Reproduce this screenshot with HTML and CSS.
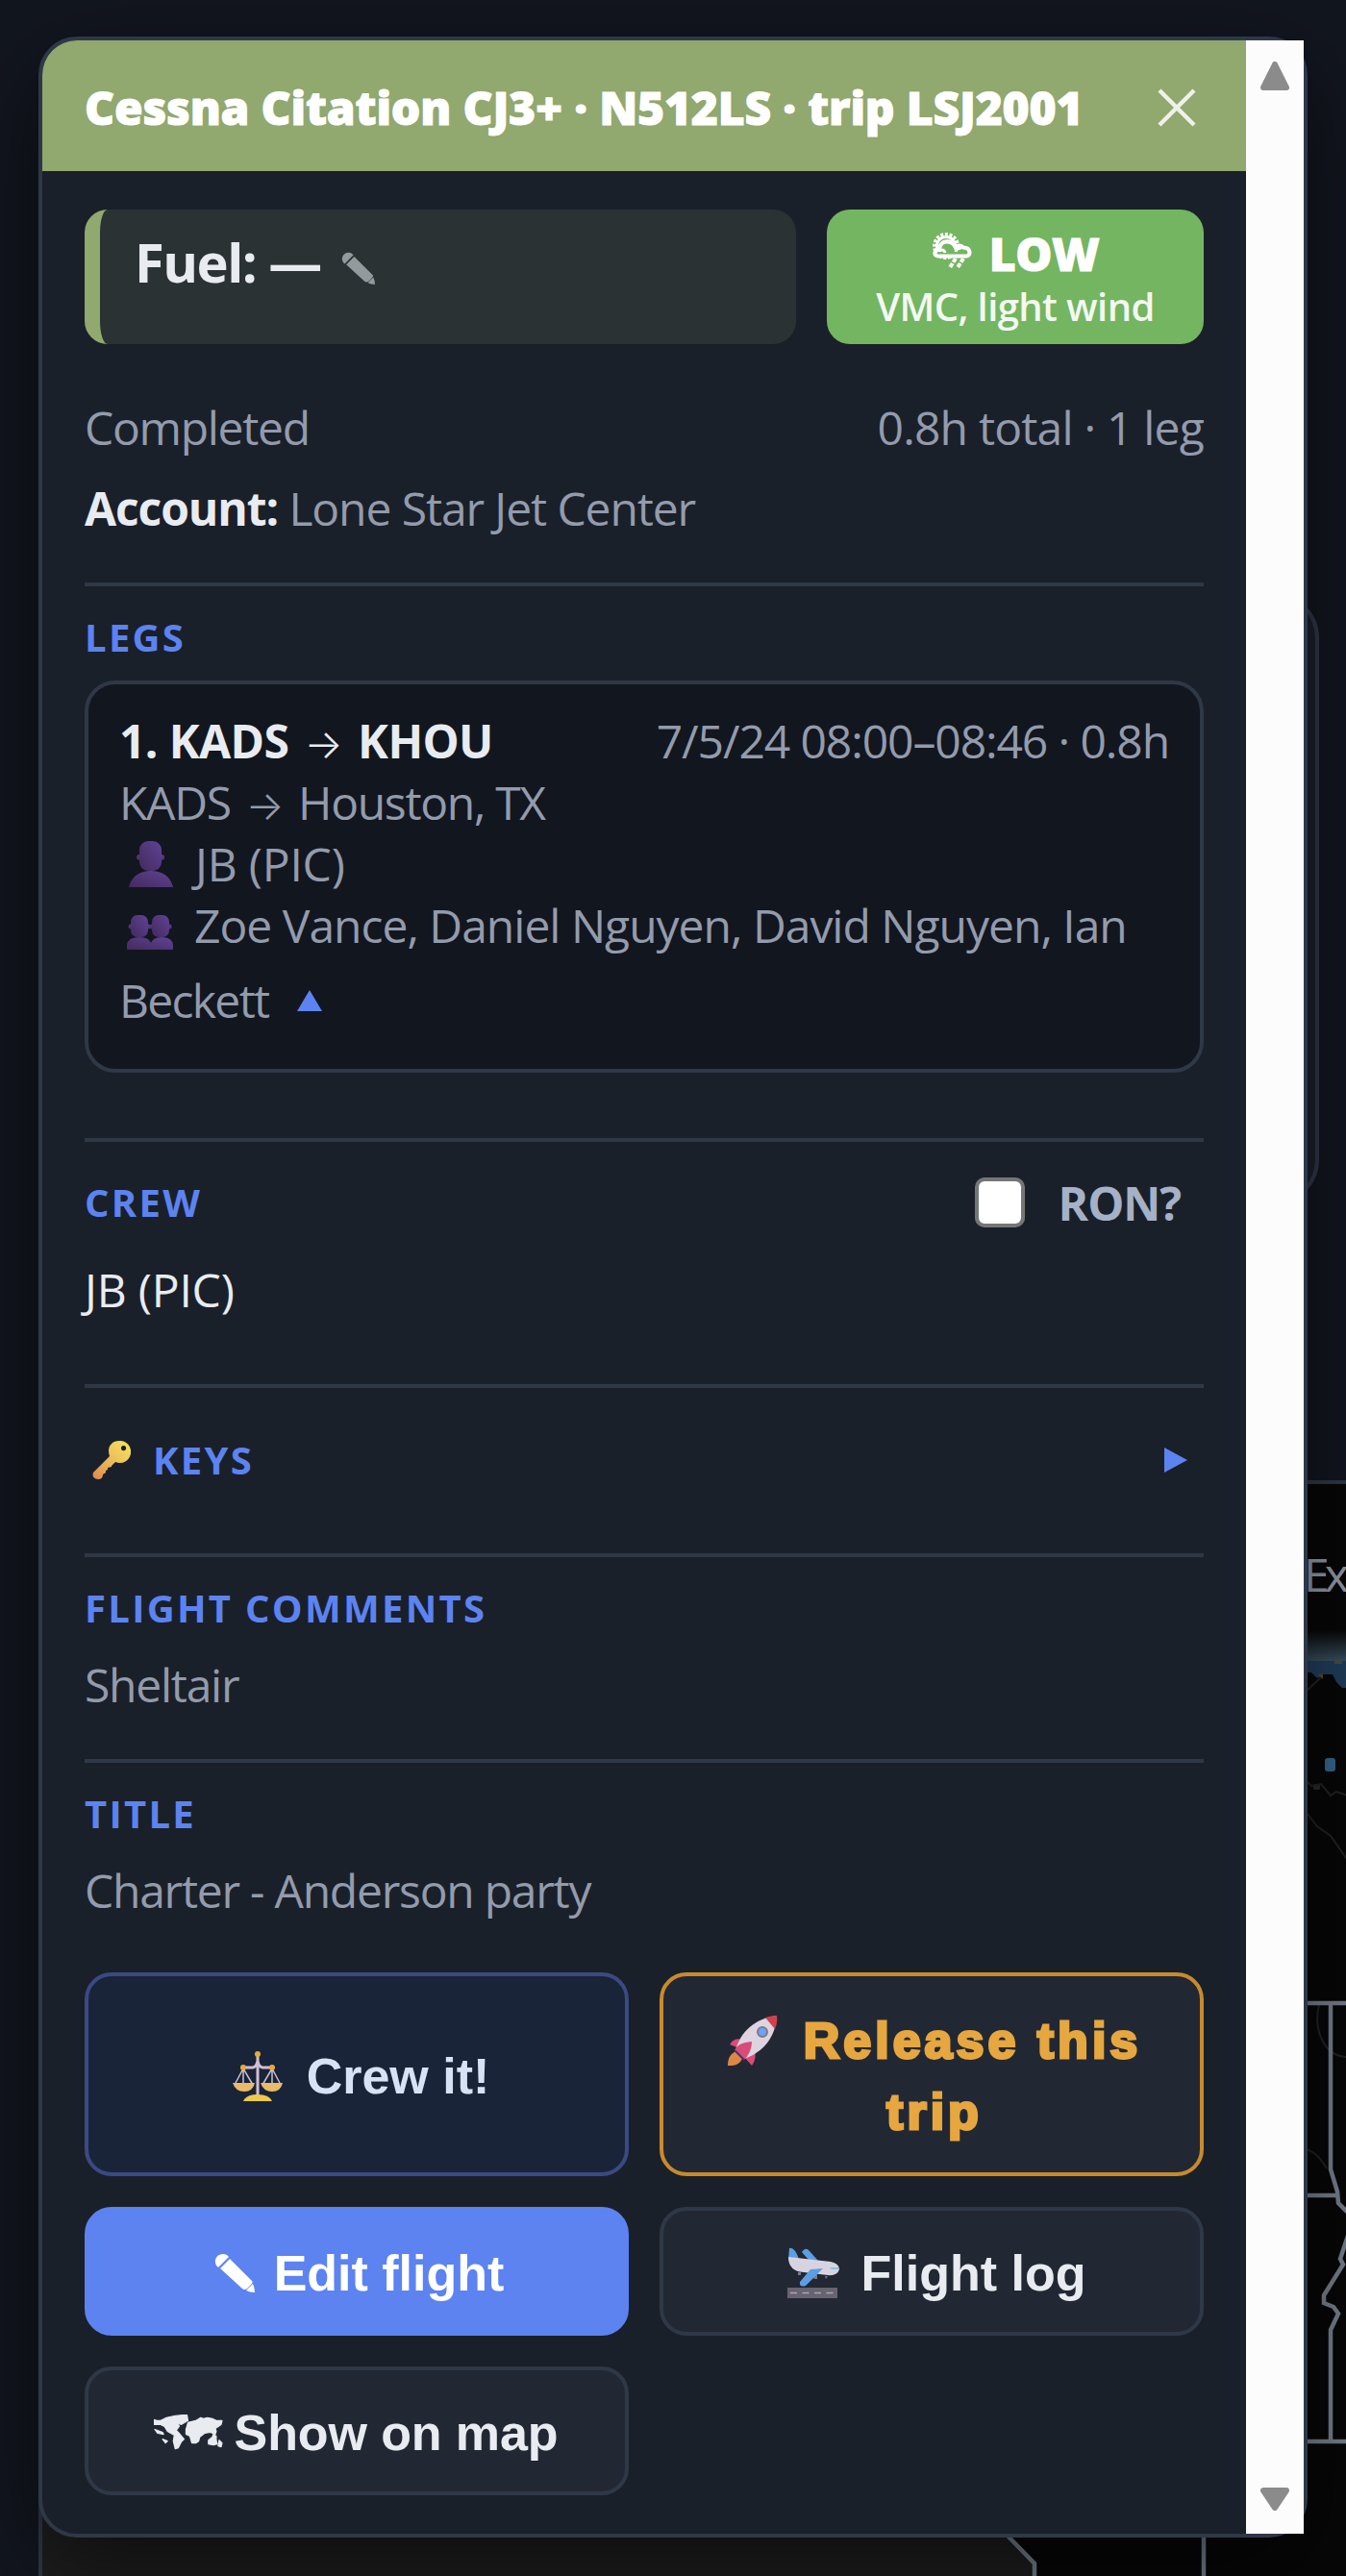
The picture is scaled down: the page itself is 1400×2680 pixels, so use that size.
FILE: index.html
```
<!DOCTYPE html>
<html lang="en">
<head>
    <meta charset="UTF-8">
    <title>Trip LSJ2001</title>
    <link rel="stylesheet" href="styles.css">
</head>
<body>
    <!-- page behind the popup -->
    <div class="back-card"></div>
    <div class="map">
        <svg class="map-svg" width="1356" height="1136" viewBox="44 1544 1356 1136">
            <defs>
                <linearGradient id="haze" x1="0" y1="0" x2="0" y2="1">
                    <stop offset="0" stop-color="#3a5160" stop-opacity="0"/>
                    <stop offset="1" stop-color="#3a5160"/>
                </linearGradient>
            </defs>
            <path d="M44 2500H1040L1050 2640L1076 2667V2680H44Z" fill="#1e1e1e"/>
            <rect x="1356" y="1696" width="48" height="32" fill="url(#haze)"/>
            <path d="M1356 1728H1400V1756H1396L1390 1750L1386 1742H1376L1370 1746L1364 1740H1356Z" fill="#213e5c"/>
            <path d="M1388 1728H1396V1731H1388ZM1370 1743L1376 1741V1747Z" fill="#544b35"/>
            <rect x="1378" y="1829" width="11" height="14" rx="3" fill="#35688f"/>
            <rect x="1366" y="1856" width="7" height="6" rx="2" fill="#2c2a26"/>
            <path d="M1356 1762L1374 1745M1356 1850L1364 1858L1374 1856L1384 1868L1390 1864L1402 1868M1356 1882L1370 1900L1384 1910L1402 1936M1372 2086C1366 2110 1376 2140 1402 2140M1356 2236C1366 2236 1374 2246 1380 2256" fill="none" stroke="#222325" stroke-width="2"/>
            <path d="M1356 2084H1404M1384 2084V2257L1391 2280L1392 2292L1404 2304M1356 2284H1391M1402 2326L1394 2350L1397 2356L1377 2388V2396L1387 2400L1392 2407L1384 2424V2540M1356 2540H1404M1046 2636L1076 2667V2680M1252 2630V2680" fill="none" stroke="#77808f" stroke-width="4.500"/>
        </svg>
        <span class="map-label">Ex</span>
    </div>

    <!-- flight popup -->
    <div class="popup">
        <div class="content">
            <div class="header">
                <span class="header-title">Cessna Citation CJ3+ · N512LS · trip LSJ2001</span>
                <svg class="close" width="40" height="40" viewBox="0 0 40 40"><path d="M2 2L38 38M38 2L2 38" stroke="#eef2e9" stroke-width="4.4"/></svg>
            </div>
            <div class="body">
                <div class="top">
                    <div class="fuel">
                        <b class="fuel-text">Fuel: —</b>
                        <svg class="fuel-pen" width="36" height="34" viewBox="0 0 43 41" fill="#939a9e"><path d="M2 13C-2 6 5-2 13 2L15 4L4 15Z"/><path d="M6 16L16 6L39 29Q41 30 37 34L34 37Q31 39 29 37Z"/><path d="M40 32Q42 36 42 41Q37 41 33 39Z"/></svg>
                    </div>
                    <div class="risk">
                        <div class="risk-level">
                            <svg width="42" height="38" viewBox="0 0 42 38" fill="none" stroke="#fff">
                                <circle cx="15" cy="14" r="11.500" stroke-width="5" stroke-dasharray="2.800 1.600"/>
                                <circle cx="15" cy="14" r="9.500" stroke-width="3"/>
                                <path d="M7 24.500C2 24.500 2 17.500 8 18C8 8 21 6 25 15.500C27 13 30 13 33 15.500C41 15.500 41 24.500 36 24.500Z" fill="#74b561" stroke-width="4.200"/>
                                <path d="M25 20Q26 16 31 16M9 18.500Q13 17 14 21" stroke-width="3"/>
                                <path d="M25 27L18.500 37M33 27L26.500 37" stroke-width="4" stroke-dasharray="4.500 1.500"/>
                            </svg>
                            <span>LOW</span>
                        </div>
                        <div class="risk-note">VMC, light wind</div>
                    </div>
                </div>

                <div class="status">
                    <span class="status-name">Completed</span>
                    <span class="status-total">0.8h total · 1 leg</span>
                </div>
                <div class="account"><b>Account:</b> <span>Lone Star Jet Center</span></div>

                <div class="section legs">
                    <div class="title">LEGS</div>
                    <div class="leg">
                        <div class="leg-head">
                            <b>1. KADS <i class="arrow">→</i> KHOU</b>
                            <span class="leg-time">7/5/24 08:00–08:46 · 0.8h</span>
                        </div>
                        <div class="leg-line leg-route">KADS <i class="arrow">→</i> Houston, TX</div>
                        <div class="leg-line leg-crew">
                            <svg class="person" width="46" height="48" viewBox="0 0 46 48">
                                <defs><linearGradient id="purple" x1="0" y1="1" x2="1" y2="0"><stop offset="0" stop-color="#432a5c"/><stop offset="1" stop-color="#5f4396"/></linearGradient></defs>
                                <g fill="url(#purple)"><circle cx="11" cy="17" r="3"/><circle cx="34" cy="17" r="3"/><rect x="11" y="0" width="23" height="31" rx="9"/><path d="M0 48C3 36 12 31 23 31S43 36 46 48Z"/></g>
                            </svg>
                            <span>JB (PIC)</span>
                        </div>
                        <div class="leg-line leg-pax">
                            <svg class="people" width="48" height="36" viewBox="0 0 48 36" fill="url(#purple)">
                                <circle cx="4" cy="12" r="2.5"/><circle cx="22" cy="12" r="2.5"/><circle cx="44" cy="12" r="2.5"/><circle cx="26" cy="12" r="2.5"/>
                                <rect x="4" y="0" width="18" height="23" rx="7"/><rect x="26" y="0" width="18" height="23" rx="7"/>
                                <path d="M0 36V31Q1 23 13 23Q23 23 25 29Q27 23 36 23Q47 23 48 31V36Z"/>
                            </svg>
                            <span>Zoe Vance, Daniel Nguyen, David Nguyen, Ian</span>
                        </div>
                        <div class="leg-line leg-more">
                            <span>Beckett</span>
                            <svg width="26" height="22" viewBox="0 0 26 22"><path d="M13 0L26 22H0Z" fill="#5c83f0"/></svg>
                        </div>
                    </div>
                </div>

                <div class="section crew">
                    <div class="crew-head">
                        <div class="title">CREW</div>
                        <label class="ron"><span class="checkbox"></span><b>RON?</b></label>
                    </div>
                    <div class="crew-name">JB (PIC)</div>
                </div>

                <div class="section keys">
                    <svg class="key" width="40" height="40" viewBox="0 0 40 40">
                        <defs><linearGradient id="gold" x1="0" y1="1" x2="1" y2="0"><stop offset="0" stop-color="#de8750"/><stop offset=".45" stop-color="#e9b95b"/><stop offset="1" stop-color="#f7e65c"/></linearGradient></defs>
                        <path fill="url(#gold)" fill-rule="evenodd" d="M28 0A11.5 11.5 0 1 1 24 22L20 26V27L16 28V30L14 31V33L11 35Q11 40 6 40Q-1 39 1 33L18 16C15 8 19 0 28 0ZM32.500 5A2.600 2.600 0 1 0 32.600 5Z"/>
                    </svg>
                    <div class="title">KEYS</div>
                    <svg class="keys-open" width="24" height="26" viewBox="0 0 24 26"><path d="M0 0L24 13L0 26Z" fill="#5c83f0"/></svg>
                </div>

                <div class="section comments">
                    <div class="title">FLIGHT COMMENTS</div>
                    <div class="text comment-text">Sheltair</div>
                </div>
                <div class="section trip-title">
                    <div class="title">TITLE</div>
                    <div class="text">Charter - Anderson party</div>
                </div>

                <div class="buttons">
                    <button class="btn btn-crew">
                        <svg width="52" height="52" viewBox="0 0 52 52">
                            <path d="M26 5V48M11 17H21Q25 16 26 10Q27 16 31 17H41" fill="none" stroke="#cfbfd0" stroke-width="3"/>
                            <path d="M11 18L2 35M11 18V35M11 18L21 35M41 18L31 35M41 18V35M41 18L50 35" fill="none" stroke="#cfbfd0" stroke-width="1.500"/>
                            <path d="M0 33H23Q21 42 12 42T0 33ZM29 33H52Q50 42 41 42T29 33Z" fill="#ebbb67"/>
                            <path d="M11 52Q14 45 26 45T41 52Z" fill="#edc94e"/>
                            <g fill="#e9aa39"><circle cx="26" cy="3" r="3"/><circle cx="11" cy="17" r="3"/><circle cx="41" cy="17" r="3"/></g>
                        </svg>
                        <span>Crew it!</span>
                    </button>
                    <button class="btn btn-release">
                        <span class="release-text"><svg width="52" height="52" viewBox="0 0 52 52">
                            <path d="M9 37C2 40 0 45 0 52Q11 53 15 45Z" fill="#dc8744"/>
                            <path d="M15 25Q7 22 2 30L12 34ZM28 37Q30 45 25 52L17 43Z" fill="#d94b78"/>
                            <path d="M8 36C13 17 28 3 51 0C50 22 37 38 17 45Z" fill="#ded4df"/>
                            <path d="M39 2Q45 0 51 0Q52 7 49 14Z" fill="#cf414c"/>
                            <path d="M7 36Q10 28 25 27Q25 38 17 46Z" fill="#d94b78"/>
                            <circle cx="36" cy="17" r="5" fill="#6aa4f4" stroke="#7d7892" stroke-width="2"/>
                            <path d="M7 36L17 46" stroke="#433477" stroke-width="2"/>
                        </svg><em>Release this</em><br>trip</span>
                    </button>
                    <button class="btn btn-edit">
                        <svg width="43" height="41" viewBox="0 0 43 41" fill="#fff"><path d="M2 13C-2 6 5-2 13 2L15 4L4 15Z"/><path d="M6 16L16 6L39 29Q41 30 37 34L34 37Q31 39 29 37Z"/><path d="M40 32Q42 36 42 41Q37 41 33 39Z"/></svg>
                        <span>Edit flight</span>
                    </button>
                    <button class="btn btn-log">
                        <svg width="54" height="54" viewBox="0 0 54 54">
                            <path d="M1 13L2 1Q7-1 12 12ZM15 5Q19-1 23 4L32 14L22 13Z" fill="#5c9ee3"/>
                            <path d="M1 10L45 15Q54 17 54 23Q52 30 42 29L17 26Q1 25 1 10Z" fill="#d8d3e0"/>
                            <path d="M11 26H14V29H11ZM26 30L31 28V33H28ZM39 30H42L40 33Z" fill="#7d7886"/>
                            <path d="M24 23L37 22L19 40Q12 42 13 36Z" fill="#5c9ee3"/>
                            <path d="M44 21H53V23H46Z" fill="#7cc8dc"/>
                            <rect x="0" y="42" width="52" height="11" fill="#686370"/>
                            <path d="M3 47.500H50" stroke="#aaa5b5" stroke-width="1.500" stroke-dasharray="7 5.500"/>
                        </svg>
                        <span>Flight log</span>
                    </button>
                    <button class="btn btn-map">
                        <svg width="72" height="37" viewBox="0 0 71 36" fill="#e8ecf1" stroke="#e8ecf1" stroke-width="1.200" stroke-linejoin="round">
                            <path d="M0 5L3 6L7 6L13 3L22 1L34 0L35 6L28 10L25 8L26 12L23 16L25 18L31 25L28 28L25 34L22 35L20 27L21 21L14 17L11 12L7 10L0 10Z"/>
                            <path d="M33 15L35 8L43 6L45 5L48 3L51 4L55 3L60 4L64 6L70 6L69 10L66 12L63 14L64 17L63 20L58 18L52 19L47 23L46 27L43 29L39 29L37 22L33 20Z"/>
                            <path d="M56 30V26L60 23L61 20L64 22V26L65 30L61 31ZM67 26L70 29L69 33L66 32ZM1 15L9 18L10 20L4 19ZM9 25L14 27L12 29Z"/>
                        </svg>
                        <span>Show on map</span>
                    </button>
                </div>
            </div>
        </div>
        <!-- scrollbar -->
        <div class="scrollbar">
            <svg width="30" height="30" viewBox="0 0 30 30"><path d="M15 3L27 27H3Z" fill="#8b8b8b" stroke="#8b8b8b" stroke-width="6" stroke-linejoin="round"/></svg>
            <svg width="30" height="24" viewBox="0 0 30 24"><path d="M3 3H27L15 21Z" fill="#8b8b8b" stroke="#8b8b8b" stroke-width="6" stroke-linejoin="round"/></svg>
        </div>
    </div>
</body>
</html>
```

FILE: styles.css
```
*{
    margin: 0;
    padding: 0;
    box-sizing: border-box;
}

body{
    position: relative;
    height: 2680px;
    padding: 38px 40px;
    overflow: hidden;
    background-color: #12161f;
    color: #939bac;
    font-family: "Open Sans", "Noto Sans", sans-serif;
    font-size: 48px;
    line-height: 64px;
    letter-spacing: -1.1px;
}

svg{
    display: block;
    flex: none;
}

/*背景*/
.back-card{
    position: absolute;
    left: 60px;
    top: 616px;
    width: 1312px;
    height: 638px;
    border: 4px solid #2f3847;
    border-radius: 48px;
    background-color: #1a202a;
}

.map{
    position: absolute;
    left: 40px;
    top: 1540px;
    width: 1360px;
    height: 1140px;
    overflow: hidden;
    border: 4px solid #2f3847;
    border-width: 4px 0 0 4px;
    background-color: #070707;
}

.map-label{
    position: absolute;
    left: 1312px;
    top: 62px;
    letter-spacing: -5px;
}

/*弹窗*/
.popup{
    position: relative;
    display: flex;
    height: 2602px;
    border: 4px solid #2f3847;
    border-radius: 40px;
    background-color: #1a2029;
    box-shadow: 0 32px 96px rgba(0, 0, 0, .55);
}

.content{
    flex: 1;
}

.header{
    display: flex;
    justify-content: space-between;
    align-items: center;
    height: 136px;
    padding: 4px 52px 0 44px;
    border-top-left-radius: 36px;
    background-color: #91a86f;
    color: #fff;
    font-weight: 800;
}

.header-title{
    letter-spacing: -.2px;
    white-space: nowrap;
    -webkit-text-stroke: 1px #fff;
}

.body{
    padding: 40px 44px;
}

.top{
    display: flex;
    gap: 32px;
}

.fuel{
    display: flex;
    gap: 21px;
    width: 740px;
    height: 140px;
    padding: 16px 36px;
    border-left: 16px solid #91a86f;
    border-radius: 24px;
    background-color: #2b3234;
    color: #e8ecf1;
    font-size: 56px;
    line-height: 76px;
    letter-spacing: -1.5px;
}

.fuel-pen{
    margin-top: 28px;
}

.risk{
    flex: 1;
    padding-top: 12px;
    border-radius: 24px;
    background-color: #74b561;
    color: #fff;
    text-align: center;
}

.risk-level{
    display: flex;
    justify-content: center;
    align-items: center;
    gap: 18px;
    height: 66px;
    font-weight: 800;
    letter-spacing: -.5px;
    -webkit-text-stroke: 1px #fff;
}

.risk-level svg{
    margin-bottom: 4px;
}

.risk-level span{
    margin-top: 2px;
}

.risk-note{
    color: #f3f8f1;
    font-size: 40px;
    font-weight: 600;
    line-height: 46px;
    letter-spacing: -.6px;
}

.status{
    display: flex;
    justify-content: space-between;
    margin-top: 55px;
}

.status-name{
    letter-spacing: -1.3px;
}

.status-total{
    letter-spacing: -.8px;
}

.account{
    margin-top: 20px;
}

.account b,
.leg-head b{
    color: #e8ecf1;
}

/*分区*/
.section{
    border-top: 4px solid #2f3847;
    padding-top: 25px;
}

.title{
    color: #5c83f0;
    font-size: 40px;
    font-weight: bold;
    letter-spacing: 2.3px;
    line-height: 56px;
}

.legs{
    margin-top: 45px;
}

.leg{
    height: 408px;
    margin-top: 17px;
    padding: 27px 32px;
    border: 4px solid #2f3847;
    border-radius: 32px;
    background-color: #12161f;
}

.leg-head{
    display: flex;
    justify-content: space-between;
    height: 64px;
}

.leg-head b{
    letter-spacing: -.6px;
}

.leg-line{
    height: 64px;
}

.leg-route{
    letter-spacing: -1.3px;
}

.arrow{
    display: inline-block;
    width: 48px;
    font-family: Inter, sans-serif;
    font-size: 42px;
    font-style: normal;
    font-weight: 300;
    line-height: 1;
    text-align: center;
}

.leg-crew,
.leg-pax,
.leg-more{
    display: flex;
    align-items: center;
    white-space: nowrap;
}

.leg-crew{
    letter-spacing: -.2px;
}

.leg-pax{
    letter-spacing: -1px;
}

.person{
    margin: 0 23px 0 10px;
}

.people{
    margin: 13px 22px 0 8px;
}

.leg-more{
    gap: 30px;
    margin-top: 14px;
    letter-spacing: -1.7px;
}

.crew{
    margin-top: 68px;
}

.crew-head{
    display: flex;
    justify-content: space-between;
    align-items: center;
    height: 75px;
}

.ron{
    display: flex;
    align-items: center;
    padding-right: 24px;
    color: #a5b1c6;
}

.ron b{
    margin-top: 3px;
}

.checkbox{
    width: 52px;
    height: 52px;
    margin-right: 35px;
    border: 4px solid #767676;
    border-radius: 10px;
    background-color: #fff;
}

.crew-name{
    margin-top: 22px;
    color: #e8ecf1;
    letter-spacing: -.2px;
}

.keys{
    display: flex;
    align-items: center;
    height: 120px;
    margin-top: 66px;
    padding: 33px 17px 0 8px;
}

.key{
    margin-right: 23px;
}

.keys-open{
    margin-left: auto;
}

.comments{
    margin-top: 56px;
}

.text{
    margin-top: 20px;
    letter-spacing: -1.25px;
}

.trip-title{
    margin-top: 45px;
}

/*按钮*/
.buttons{
    display: grid;
    grid-template-columns: 1fr 1fr;
    grid-template-rows: 212px 134px 134px;
    gap: 32px;
    margin-top: 53px;
}

.btn{
    display: flex;
    justify-content: center;
    align-items: center;
    padding-top: 3px;
    border: 4px solid #2f3847;
    border-radius: 28px;
    background-color: #222833;
    color: #e8ecf1;
    font-family: "Liberation Sans", Arial, sans-serif;
    font-size: 52px;
    font-weight: bold;
    line-height: 74px;
    white-space: nowrap;
}

.btn-crew{
    gap: 25px;
    padding-left: 9px;
    border-color: #3a4a82;
    background-color: #1a2438;
    color: #d8e2f5;
}

.btn-release{
    padding-left: 6px;
    border-color: #c78b2d;
    color: #e6a740;
}

.release-text{
    letter-spacing: 4px;
    -webkit-text-stroke: 3px #e6a740;
}

.release-text svg{
    display: inline-block;
    margin-right: 27px;
    vertical-align: -8px;
}

.release-text em{
    font-style: normal;
}

.btn-edit{
    gap: 19px;
    padding-left: 5px;
    border-color: #5c83f0;
    background-color: #5c83f0;
    color: #fff;
}

.btn-log{
    gap: 23px;
    padding-left: 10px;
}

.btn-map{
    gap: 12px;
    padding-right: 2px;
    letter-spacing: -.1px;
}

/*滚动条*/
.scrollbar{
    display: flex;
    flex-direction: column;
    justify-content: space-between;
    align-items: center;
    width: 60px;
    padding: 22px 0 24px;
    background-color: #fcfcfc;
}
```
